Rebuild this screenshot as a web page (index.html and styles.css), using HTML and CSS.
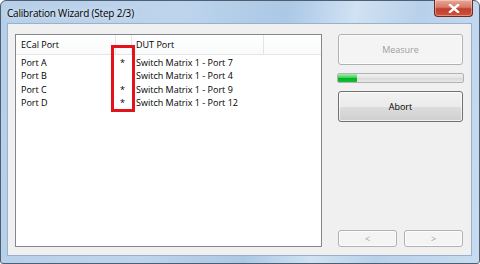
FILE: index.html
```html
<!DOCTYPE html>
<html lang="en">
<head>
    <meta charset="UTF-8">
    <title>Calibration Wizard</title>
    <link rel="stylesheet" href="styles.css">
</head>
<body>
    <div class="window">
        <div class="titlebar">
            <span class="title">Calibration Wizard (Step 2/3)</span>
            <button class="close">
                <svg width="12" height="9" viewBox="0 0 12 9">
                    <path d="M2 1 L10 8 M10 1 L2 8" stroke="#ffffff" stroke-width="2.4" stroke-linecap="square"/>
                </svg>
            </button>
        </div>

        <div class="client">
            <div class="list">
                <div class="list-header">
                    <span class="col col-ecal">ECal Port</span>
                    <span class="col col-mark"></span>
                    <span class="col col-dut">DUT Port</span>
                    <span class="col col-fill"></span>
                </div>
                <div class="rows">
                    <div class="row">
                        <span class="col col-ecal">Port A</span>
                        <span class="col col-mark">*</span>
                        <span class="col col-dut">Switch Matrix 1 - Port 7</span>
                    </div>
                    <div class="row">
                        <span class="col col-ecal">Port B</span>
                        <span class="col col-mark"></span>
                        <span class="col col-dut">Switch Matrix 1 - Port 4</span>
                    </div>
                    <div class="row">
                        <span class="col col-ecal">Port C</span>
                        <span class="col col-mark">*</span>
                        <span class="col col-dut">Switch Matrix 1 - Port 9</span>
                    </div>
                    <div class="row">
                        <span class="col col-ecal">Port D</span>
                        <span class="col col-mark">*</span>
                        <span class="col col-dut">Switch Matrix 1 - Port 12</span>
                    </div>
                </div>
                <div class="highlight"></div>
            </div>

            <div class="side">
                <button class="btn big" disabled>Measure</button>
                <div class="progress"><div class="progress-fill"></div></div>
                <button class="btn big">Abort</button>
                <div class="nav">
                    <button class="btn small" disabled>&lt;</button>
                    <button class="btn small" disabled>&gt;</button>
                </div>
            </div>
        </div>
    </div>
</body>
</html>
```

FILE: styles.css
```css
body {
    margin: 0;
    width: 480px;
    height: 264px;
    overflow: hidden;
    font-family: 'Open Sans', 'Noto Sans', sans-serif;
}

.window {
    box-sizing: border-box;
    width: 480px;
    height: 264px;
    display: flex;
    flex-direction: column;
    padding: 0 7px 7px 6px;
    border: 1px solid #4f5e70;
    border-radius: 6px 6px 3px 3px;
    background: linear-gradient(100deg, #b6cfe9 0%, #bdd4ec 35%, #abc8e5 55%, #d0e2f3 68%, #b8d1ea 80%, #c8dcf0 100%);
}

.titlebar {
    height: 22px;
    display: flex;
    align-items: flex-start;
}

.title {
    font-size: 10px;
    letter-spacing: -0.2px;
    color: #000;
    padding-top: 5px;
    text-shadow: 0 0 6px rgba(255, 255, 255, 0.9);
}

.close {
    margin-left: auto;
    margin-right: -1px;
    margin-top: -1px;
    width: 39px;
    height: 17px;
    padding: 0;
    display: flex;
    align-items: center;
    justify-content: center;
    border: 1px solid #6b2a22;
    border-top: none;
    border-radius: 0 0 4px 4px;
    background: linear-gradient(#e9a898 0%, #d77a68 45%, #c0402c 55%, #d0503a 100%);
    box-shadow: inset 0 0 0 1px rgba(255, 255, 255, 0.35);
}

.client {
    flex: 1;
    display: flex;
    padding: 10px 8px 8px 7px;
    background-color: #f0f0f0;
    border: 1px solid #98b1cc;
}

.list {
    position: relative;
    box-sizing: border-box;
    width: 307px;
    height: 213px;
    background-color: #fff;
    border: 1px solid #828790;
    font-size: 9px;
    color: #000;
}

.list-header {
    display: flex;
    height: 19px;
    border-bottom: 1px solid #e5e5e5;
    background: linear-gradient(#ffffff, #f9fafb);
}

.list-header .col {
    padding-top: 1px;
    line-height: 18px;
    border-right: 1px solid #e5e5e5;
}

.list-header .col-fill {
    flex: 1;
    border-right: none;
}

.col {
    box-sizing: border-box;
    padding-left: 5px;
    white-space: nowrap;
}

.col-ecal {
    width: 100px;
}

.col-mark {
    width: 16px;
    padding-left: 4px;
    font-size: 9px;
}

.col-dut {
    width: 132px;
    padding-left: 4px;
}

.rows {
    padding-top: 1px;
}

.row {
    display: flex;
    height: 13.4px;
    line-height: 13.4px;
}

.highlight {
    position: absolute;
    left: 95px;
    top: 10px;
    box-sizing: border-box;
    width: 24px;
    height: 67px;
    border: 3px solid #e3121b;
}

.side {
    width: 125px;
    margin-left: 16px;
    display: flex;
    flex-direction: column;
}

.btn {
    font-family: 'Open Sans', 'Noto Sans', sans-serif;
    font-size: 9px;
    color: #000;
    padding: 0;
    border: 1px solid #707070;
    border-radius: 3px;
    background: linear-gradient(#f2f2f2 0%, #ebebeb 50%, #dddddd 50%, #cfcfcf 100%);
    box-shadow: inset 0 0 0 1px rgba(255, 255, 255, 0.7);
}

.btn:disabled {
    color: #a0a0a0;
    border-color: #adb2b5;
    background: #f4f4f4;
}

.big {
    height: 31px;
}

.progress {
    margin: 8px -1px;
    height: 10px;
    box-sizing: border-box;
    border: 1px solid #b2b2b2;
    border-radius: 2px;
    background: linear-gradient(#f0f0f0 0%, #e4e4e4 50%, #d8d8d8 51%, #e8e8e8 100%);
    overflow: hidden;
}

.progress-fill {
    width: 19px;
    height: 100%;
    background: linear-gradient(#a6eeb0 0%, #3ed25a 45%, #06b025 55%, #12c030 100%);
}

.nav {
    margin-top: auto;
    display: flex;
    gap: 7px;
}

.small {
    flex: 1;
    height: 17px;
    line-height: 15px;
}
```
